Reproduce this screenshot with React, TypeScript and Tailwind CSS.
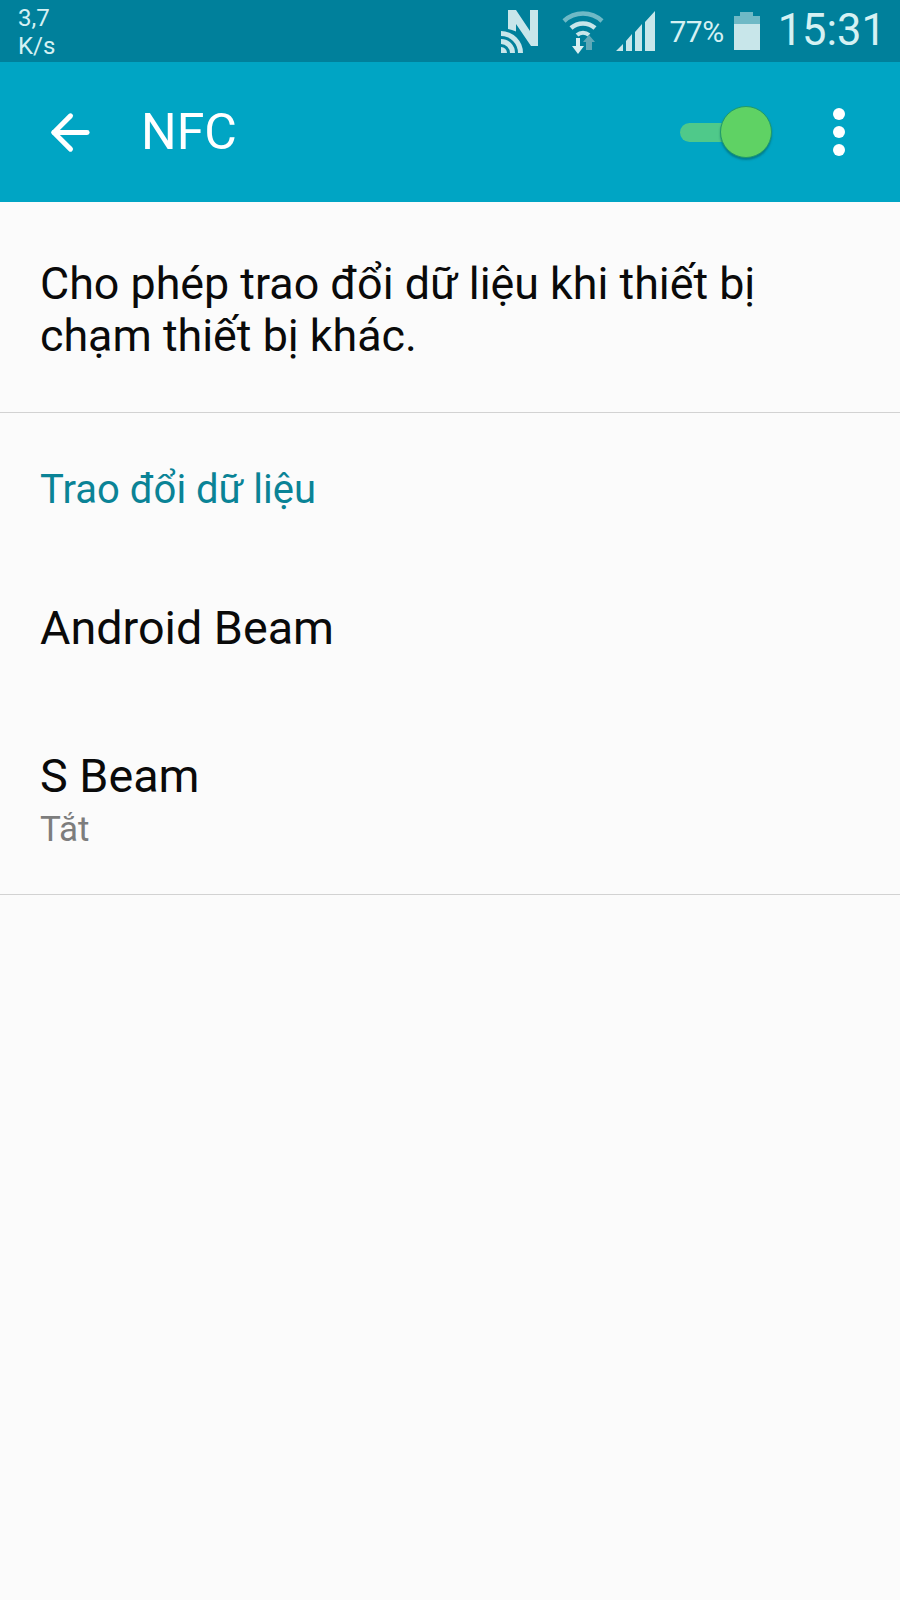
import React from 'react';
import { ArrowLeft } from 'lucide-react';

const NfcIcon = () => (
  <svg width="37" height="43" viewBox="0 0 37 43" fill="#c8e6ea">
    <path d="M7 0h8l14 21V0h8v36h-7L15 14v7.500q-4-2-8-2.500z" />
    <path d="M0 21a22 22 0 0 1 22 22h-5A17 17 0 0 0 0 26zM0 29a14 14 0 0 1 14 14H9a9 9 0 0 0-9-9zM0 37a6 6 0 0 1 6 6H0z" />
  </svg>
);

const WifiIcon = () => (
  <svg width="42" height="46" viewBox="0 0 42 46" fill="none">
    <path d="M2 13a28 28 0 0 1 38 0" stroke="#6fb9c6" strokeWidth="4.5" />
    <path d="M9 20a18 18 0 0 1 24 0" stroke="#c8e6ea" strokeWidth="4.500" />
    <path d="M15 27a9 9 0 0 1 12 0" stroke="#c8e6ea" strokeWidth="4" />
    <path d="M14 30h4v8h4l-6 8-6-8h4z" fill="#d9f0f2" />
    <path d="M27 27l6 7h-3v8h-6v-8h-3z" fill="#5fa9b8" />
  </svg>
);

const SignalIcon = () => (
  <svg width="40" height="41" viewBox="0 0 40 41" fill="#c8e6ea">
    <path d="M0 40 7 33v7zM10 30l6-7v17h-6zM19 21l7-8v27h-7zM29 11 39 0v40H29z" />
  </svg>
);

const BatteryIcon = () => (
  <div className="flex flex-col items-center w-[26px]">
    <div className="w-[13px] h-[4px] bg-[#6fb9c6]" />
    <div className="w-[26px] h-[34px] bg-[#c8e6ea] relative">
      <div className="absolute top-0 left-0 right-0 h-[8px] bg-[#6fb9c6]" />
    </div>
  </div>
);

export default function App() {
  return (
    <div className="w-[900px] h-[1600px] bg-[#fbfbfb] flex flex-col font-['Roboto',sans-serif]">
      {/* Status bar */}
      <div className="h-[62px] bg-[#00809b] flex items-center justify-between pl-[18px] pr-[14px] text-[#d5f1f3]">
        <div className="text-[24px] leading-[28px] pt-[2px]">
          <div>3,7</div>
          <div>K/s</div>
        </div>
        <div className="flex items-center">
          <NfcIcon />
          <div className="ml-[24px]"><WifiIcon /></div>
          <div className="ml-[12px]"><SignalIcon /></div>
          <span className="ml-[13px] text-[30px] tracking-[-0.5px]">77%</span>
          <div className="ml-[10px]"><BatteryIcon /></div>
          <span className="ml-[18px] text-[43.5px] leading-none">15:31</span>
        </div>
      </div>

      {/* Action bar */}
      <div className="h-[140px] bg-[#00a5c4] flex items-center text-white">
        <ArrowLeft className="ml-[42px] w-[57px] h-[57px]" strokeWidth={2.1} />
        <span className="ml-[42px] text-[50px]">NFC</span>
        <div className="ml-auto relative w-[92px] h-[52px] flex items-center">
          <div className="w-[60px] h-[19px] rounded-full bg-[#4fc98a]" />
          <div className="absolute right-0 top-0 w-[52px] h-[52px] rounded-full bg-[#5fd264] border border-[#1f9a6a] shadow-[0_2px_2px_rgba(0,90,90,0.5)]" />
        </div>
        <div className="ml-[61px] mr-[55px] flex flex-col gap-[6px]">
          <div className="w-[12px] h-[12px] rounded-full bg-white" />
          <div className="w-[12px] h-[12px] rounded-full bg-white" />
          <div className="w-[12px] h-[12px] rounded-full bg-white" />
        </div>
      </div>

      {/* Description */}
      <div className="pt-[56px] pb-[50px] px-[40px] border-b border-[#d2d2d2] text-[44.8px] leading-[52px] text-[#0a0a0a]">
        Cho phép trao đổi dữ liệu khi thiết bị<br />chạm thiết bị khác.
      </div>

      <div className="pl-[40px] pt-[52px] text-[40px] leading-[50px] text-[#0a8396]">Trao đổi dữ liệu</div>

      <div className="pl-[40px] pt-[83px] text-[46.7px] leading-[60px] text-[#0a0a0a]">Android Beam</div>

      {/* S Beam */}
      <div className="pl-[40px] pt-[88px] pb-[42px] border-b border-[#d2d2d2]">
        <div className="text-[46.7px] leading-[60px] text-[#0a0a0a]">S Beam</div>
        <div className="mt-[2px] text-[35px] leading-[44px] text-[#7d7d7d]">Tắt</div>
      </div>
    </div>
  );
}
